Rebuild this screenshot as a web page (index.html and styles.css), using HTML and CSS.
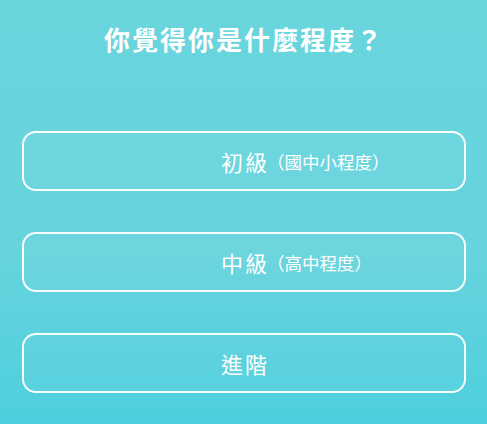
FILE: index.html
```html
<!DOCTYPE html>
<html lang="zh-Hant">
<head>
<meta charset="utf-8">
<title>程度選擇</title>
<link rel="stylesheet" href="styles.css">
</head>
<body>
<main class="page">
  <h1 class="title">你覺得你是什麼程度？</h1>
  <div class="options">
    <button class="option"><span class="spacer"></span><span class="label">初級</span><span class="note">（國中小程度）</span></button>
    <button class="option"><span class="spacer"></span><span class="label">中級</span><span class="note">（高中程度）</span></button>
    <button class="option"><span class="spacer"></span><span class="label">進階</span><span class="note"></span></button>
  </div>
</main>
</body>
</html>
```
FILE: styles.css
```css
html, body {
  margin: 0;
  padding: 0;
}
body {
  font-family: "Noto Sans CJK TC", "Noto Sans", sans-serif;
  color: #ffffff;
}
.page {
  box-sizing: border-box;
  height: 424px;
  padding: 23px 21px 0 22px;
  background: linear-gradient(180deg, #69d5dd 0%, #66d4dd 60%, #4ecfdd 100%);
  overflow: hidden;
}
.title {
  margin: 0;
  font-size: 26px;
  line-height: 32px;
  font-weight: 700;
  letter-spacing: 2px;
  text-align: center;
}
.options {
  display: flex;
  flex-direction: column;
  gap: 41px;
  margin-top: 76px;
}
.option {
  box-sizing: border-box;
  height: 60px;
  width: 100%;
  display: grid;
  grid-template-columns: 1fr auto 1fr;
  align-items: center;
  padding: 0;
  border: 2px solid rgba(255, 255, 255, 0.95);
  border-radius: 14px;
  background: rgba(255, 255, 255, 0.04);
  color: #ffffff;
  font-family: inherit;
  cursor: pointer;
}
.label {
  font-size: 22px;
  letter-spacing: 2px;
  line-height: 28px;
  margin-right: -2px;
}
.note {
  justify-self: start;
  font-size: 17.5px;
  line-height: 22px;
  margin-top: 2px;
}
```
